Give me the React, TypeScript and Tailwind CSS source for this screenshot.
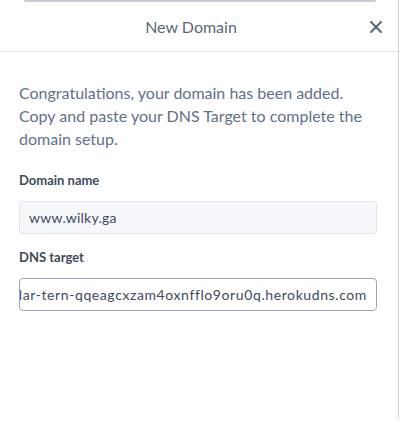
import { X } from 'lucide-react';

const font = { fontFamily: '"Lato", "Open Sans", sans-serif' };

function Field({ label, value, muted, className }: { label: string; value: string; muted?: boolean; className: string }) {
  return (
    <div className={className}>
      <div className="text-[13px] font-bold text-[#3e4a5c] leading-[18px]">{label}</div>
      <div
        className={`mt-[12px] h-[33px] rounded-[4px] border flex items-center overflow-hidden whitespace-nowrap text-[14px] text-[#3e4a5c] ${
          muted ? 'bg-[#f7f8fb] border-[#dfe3ea] pl-[9px]' : 'bg-white border-[#9aa7bb] pr-[9px] justify-end'
        }`}
      >
        <span className={`shrink-0 ${muted ? 'tracking-[0.25px]' : 'tracking-[0.6px]'}`}>{value}</span>
      </div>
    </div>
  );
}

export default function App() {
  return (
    <div className="w-[400px] h-[425px] bg-white relative overflow-hidden" style={font}>
      <div className="h-[2px] mx-[24px] bg-[#c7ccd6] rounded-b-full" />
      <div className="absolute right-[1px] top-0 bottom-[6px] w-px bg-[#cfd4dc]" />
      <div className="w-[398px]">
        <div className="h-[50px] flex items-center justify-center relative border-b border-[#e3e6eb]">
          <span className="text-[16px] text-[#5a6779] mr-[16px]">New Domain</span>
          <X className="absolute right-[12px] top-[15px] w-[20px] h-[20px] text-[#5a6779]" strokeWidth={2.4} />
        </div>
        <div className="px-[19px] pr-[21px] pt-[29px]">
          <p className="text-[16px] leading-[23px] text-[#62708a]">
            Congratulations, your domain has been added. Copy and paste your DNS Target to complete the domain setup.
          </p>
          <Field className="mt-[21px]" label="Domain name" value="www.wilky.ga" muted />
          <Field className="mt-[14px]" label="DNS target" value="stellar-tern-qqeagcxzam4oxnfflo9oru0q.herokudns.com" />
        </div>
      </div>
    </div>
  );
}
